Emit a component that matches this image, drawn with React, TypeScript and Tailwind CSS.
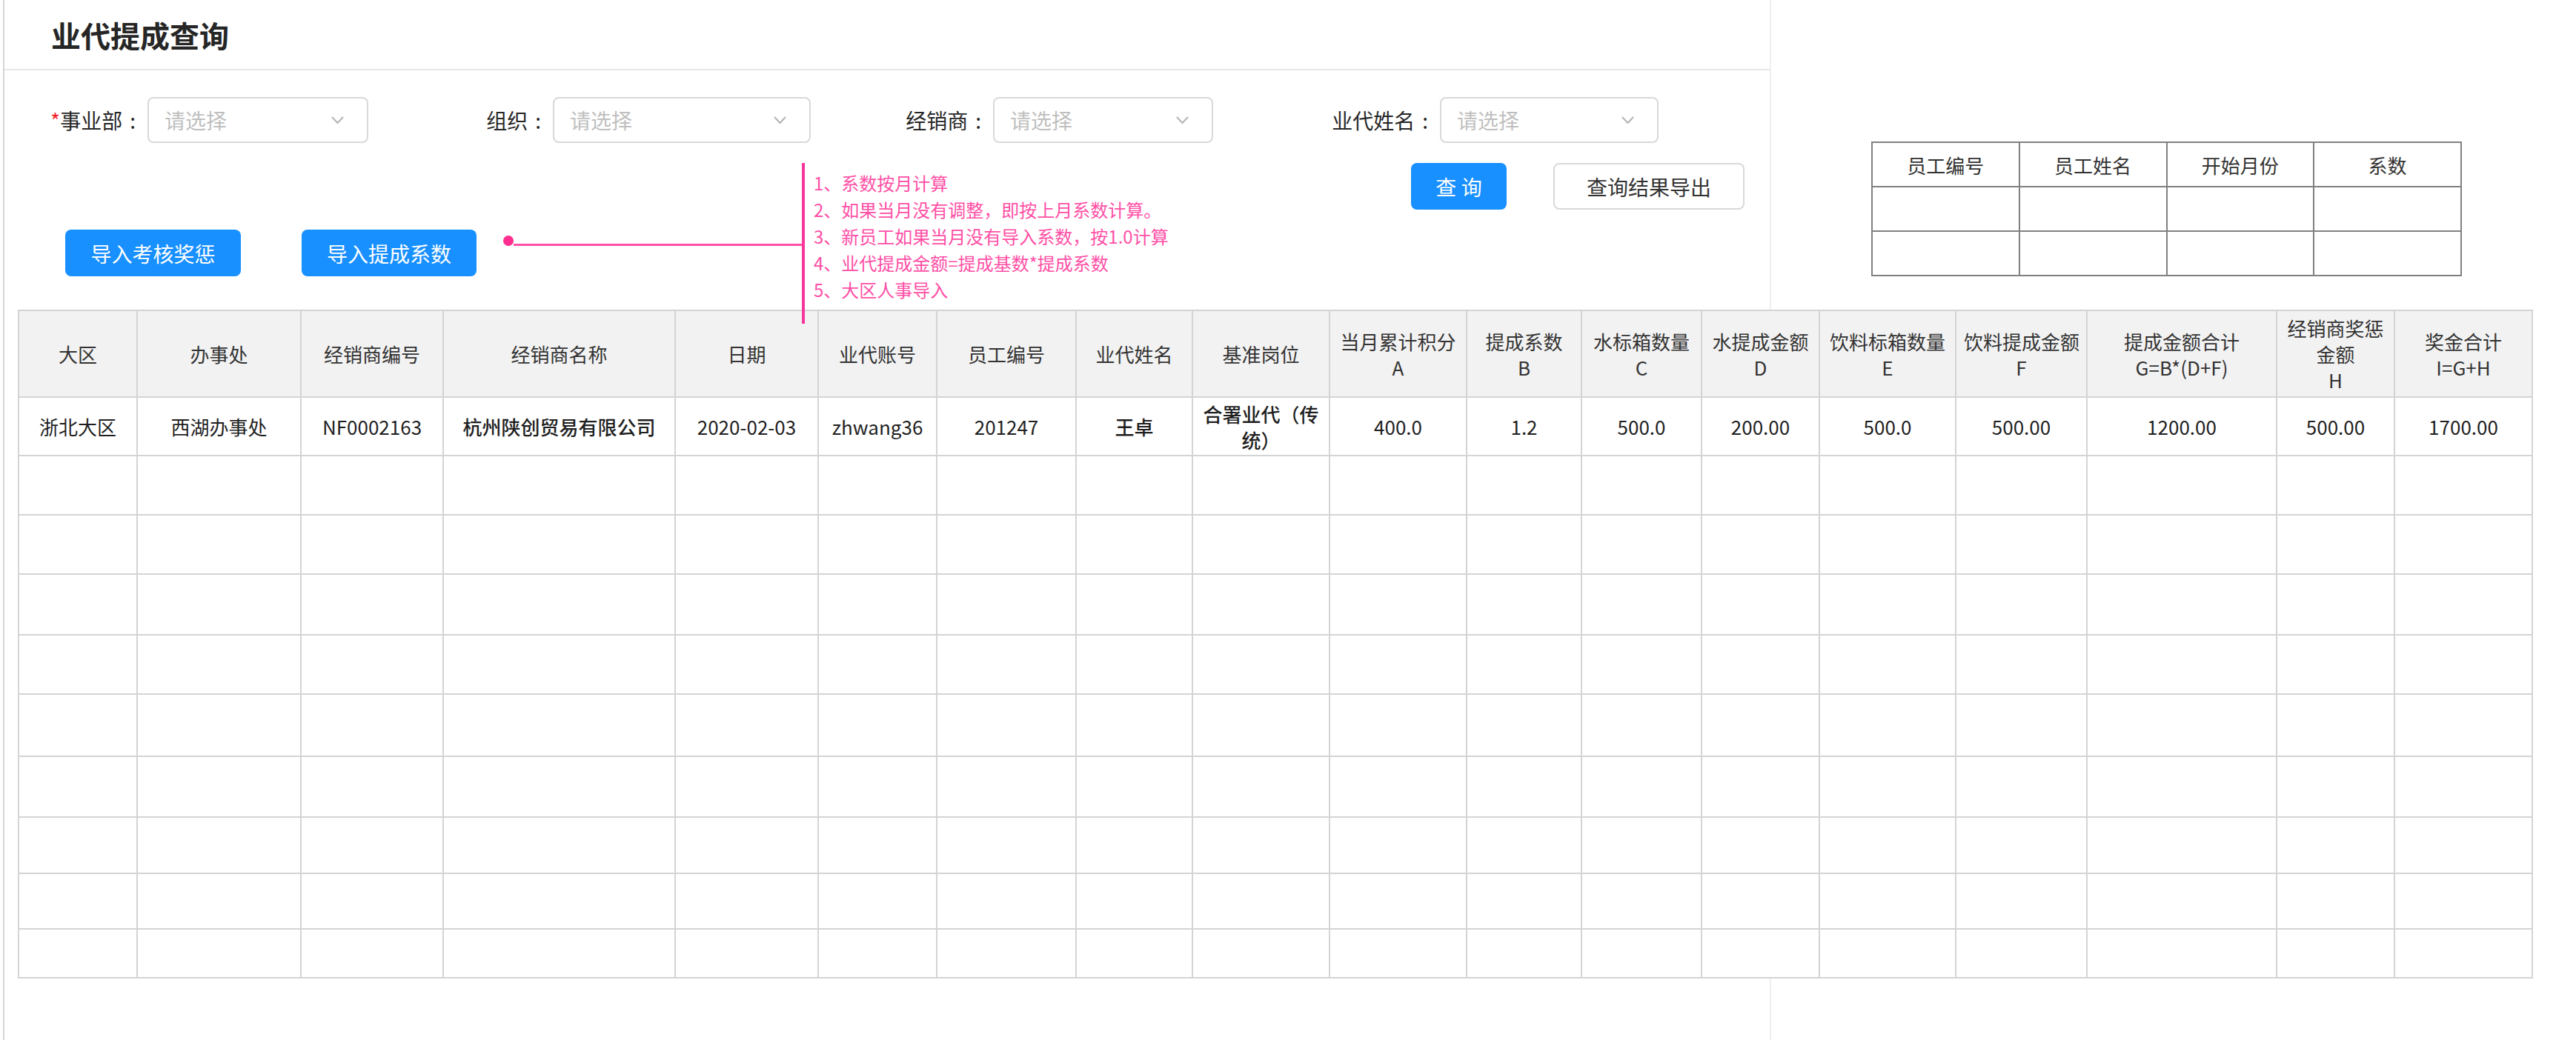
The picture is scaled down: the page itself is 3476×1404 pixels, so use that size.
import React from "react";

type Col = { w: string; head: string[]; val: string; strong?: boolean };

const columns: Col[] = [
  { w: "w-[160px]", head: ["大区"], val: "浙北大区" },
  { w: "w-[221px]", head: ["办事处"], val: "西湖办事处" },
  { w: "w-[192px]", head: ["经销商编号"], val: "NF0002163" },
  { w: "w-[313px]", head: ["经销商名称"], val: "杭州陕创贸易有限公司", strong: true },
  { w: "w-[193px]", head: ["日期"], val: "2020-02-03" },
  { w: "w-[160px]", head: ["业代账号"], val: "zhwang36" },
  { w: "w-[188px]", head: ["员工编号"], val: "201247" },
  { w: "w-[157px]", head: ["业代姓名"], val: "王卓", strong: true },
  { w: "w-[185px]", head: ["基准岗位"], val: "合署业代（传统）", strong: true },
  { w: "w-[185px]", head: ["当月累计积分", "A"], val: "400.0" },
  { w: "w-[155px]", head: ["提成系数", "B"], val: "1.2" },
  { w: "w-[162px]", head: ["水标箱数量", "C"], val: "500.0" },
  { w: "w-[159px]", head: ["水提成金额", "D"], val: "200.00" },
  { w: "w-[184px]", head: ["饮料标箱数量", "E"], val: "500.0" },
  { w: "w-[177px]", head: ["饮料提成金额", "F"], val: "500.00" },
  { w: "w-[256px]", head: ["提成金额合计", "G=B*(D+F)"], val: "1200.00" },
  { w: "w-[159px]", head: ["经销商奖惩", "金额", "H"], val: "500.00" },
  { w: "w-[186px]", head: ["奖金合计", "I=G+H"], val: "1700.00" },
];

// empty rows in the reference are not all the same height
const emptyRows = [
  "h-[80px]",
  "h-[80px]",
  "h-[82px]",
  "h-[80px]",
  "h-[84px]",
  "h-[82px]",
  "h-[76px]",
  "h-[75px]",
  "h-[66px]",
];

const notes = [
  "1、系数按月计算",
  "2、如果当月没有调整，即按上月系数计算。",
  "3、新员工如果当月没有导入系数，按1.0计算",
  "4、业代提成金额=提成基数*提成系数",
  "5、大区人事导入",
];

const Chevron = () => (
  <svg width="17" height="11" viewBox="0 0 17 11" fill="none">
    <polyline
      points="1.5,1.5 8.5,9 15.5,1.5"
      stroke="#b3b3b3"
      strokeWidth="2"
      strokeLinecap="round"
      strokeLinejoin="round"
    />
  </svg>
);

const FakeSelect: React.FC<{ w: string }> = ({ w }) => (
  <div
    className={`${w} h-[62px] border-2 border-[#d9d9d9] rounded-[8px] flex items-center justify-between pl-[21px] pr-[31px] bg-white`}
  >
    <span className="text-[28px] text-[#bfbfbf]">请选择</span>
    <Chevron />
  </div>
);

const FormItem: React.FC<{
  labelW: string;
  selectW: string;
  required?: boolean;
  label: string;
}> = ({ labelW, selectW, required, label }) => (
  <div className="flex items-center">
    <div className={`${labelW} text-right text-[28px] text-[#262626] whitespace-nowrap`}>
      {required && <span className="text-[#f5222d]">*</span>}
      {label}
      <span className="ml-[10px] mr-[16px]">:</span>
    </div>
    <FakeSelect w={selectW} />
  </div>
);

const App: React.FC = (): React.ReactElement => {
  return (
    <div className="w-[3476px] h-[1404px] bg-white overflow-hidden font-['Noto_Sans_CJK_SC','PingFang_SC',sans-serif] text-[#262626]">
      <div className="ml-[4px] h-full border-l-2 border-[#d6d6d6] flex flex-col">
        {/* top area: query card on the left, sample sheet on the right */}
        <div className="flex h-[418px]">
          <div className="w-[2384px] shrink-0 border-r-2 border-[#efefef] flex flex-col">
            <div className="h-[95px] border-b-2 border-[#e6e6e8] flex items-center pl-[63px]">
              <h1 className="text-[40px] font-bold text-[#262626] leading-none">业代提成查询</h1>
            </div>

            <div className="mt-[36px] flex items-center h-[62px]">
              <FormItem labelW="w-[193px]" selectW="w-[298px]" required label="事业部" />
              <FormItem labelW="w-[249px]" selectW="w-[348px]" label="组织" />
              <FormItem labelW="w-[246px]" selectW="w-[297px]" label="经销商" />
              <FormItem labelW="w-[306px]" selectW="w-[295px]" label="业代姓名" />
            </div>

            <div className="mt-[27px] flex items-start h-[198px]">
              <button className="mt-[90px] ml-[82px] w-[237px] h-[63px] rounded-[8px] bg-[#1890ff] text-white text-[28px]">
                导入考核奖惩
              </button>
              <button className="mt-[90px] ml-[82px] w-[236px] h-[63px] rounded-[8px] bg-[#1890ff] text-white text-[28px]">
                导入提成系数
              </button>

              {/* annotation pointer */}
              <div className="mt-[98px] ml-[36px] flex items-end">
                <div className="w-[14px] h-[14px] rounded-full bg-[#ff2d8f]" />
                <div className="w-[389px] h-[3px] bg-[#ff4fa6]" />
              </div>
              <div className="relative z-10 w-[4px] h-[217px] bg-[#f8359a]" />
              <div className="ml-[12px] mt-[9px] flex flex-col text-[24px] leading-[36px] text-[#ff4fa6] whitespace-nowrap">
                {notes.map((n) => (
                  <span key={n}>{n}</span>
                ))}
              </div>

              <div className="ml-auto mr-[34px] flex items-start gap-[63px]">
                <button className="w-[129px] h-[63px] rounded-[8px] bg-[#1890ff] text-white text-[28px]">
                  查 询
                </button>
                <button className="w-[258px] h-[63px] rounded-[8px] border-2 border-[#d9d9d9] bg-white text-[#333333] text-[28px]">
                  查询结果导出
                </button>
              </div>
            </div>
          </div>

          <div className="flex-1 pt-[191px] pl-[135px]">
            <table className="table-fixed border-collapse w-[797px]">
              <tbody>
                <tr>
                  {["员工编号", "员工姓名", "开始月份", "系数"].map((h) => (
                    <td
                      key={h}
                      className="h-[60px] border-2 border-[#808080] text-center text-[26px] text-[#333333]"
                    >
                      {h}
                    </td>
                  ))}
                </tr>
                {[0, 1].map((r) => (
                  <tr key={r}>
                    {[0, 1, 2, 3].map((c) => (
                      <td key={c} className="h-[60px] border-2 border-[#808080]" />
                    ))}
                  </tr>
                ))}
              </tbody>
            </table>
          </div>
        </div>

        {/* result table */}
        <div className="ml-[18px]">
          <table className="table-fixed border-collapse w-[3392px] text-[26px] leading-[35px] text-[#333333]">
            <colgroup>
              {columns.map((c) => (
                <col key={c.head.join()} className={c.w} />
              ))}
            </colgroup>
            <thead>
              <tr>
                {columns.map((c) => (
                  <th
                    key={c.head.join()}
                    className="h-[117px] bg-[#f2f2f2] border-2 border-[#d4d4d4] font-normal text-center align-middle px-[10px]"
                  >
                    {c.head.map((line) => (
                      <div key={line} className="whitespace-nowrap">
                        {line}
                      </div>
                    ))}
                  </th>
                ))}
              </tr>
            </thead>
            <tbody>
              <tr>
                {columns.map((c) => (
                  <td
                    key={c.head.join()}
                    className={`h-[79px] border-2 border-[#d4d4d4] text-center align-middle px-[12px] text-[#1f1f1f] ${
                      c.strong ? "font-medium" : ""
                    }`}
                  >
                    {c.val}
                  </td>
                ))}
              </tr>
              {emptyRows.map((h, i) => (
                <tr key={i}>
                  {columns.map((c) => (
                    <td key={c.head.join()} className={`${h} border-2 border-[#d4d4d4]`} />
                  ))}
                </tr>
              ))}
            </tbody>
          </table>
        </div>

        <div className="w-[2384px] flex-1 border-r-2 border-[#efefef]" />
      </div>
    </div>
  );
};

export default App;
